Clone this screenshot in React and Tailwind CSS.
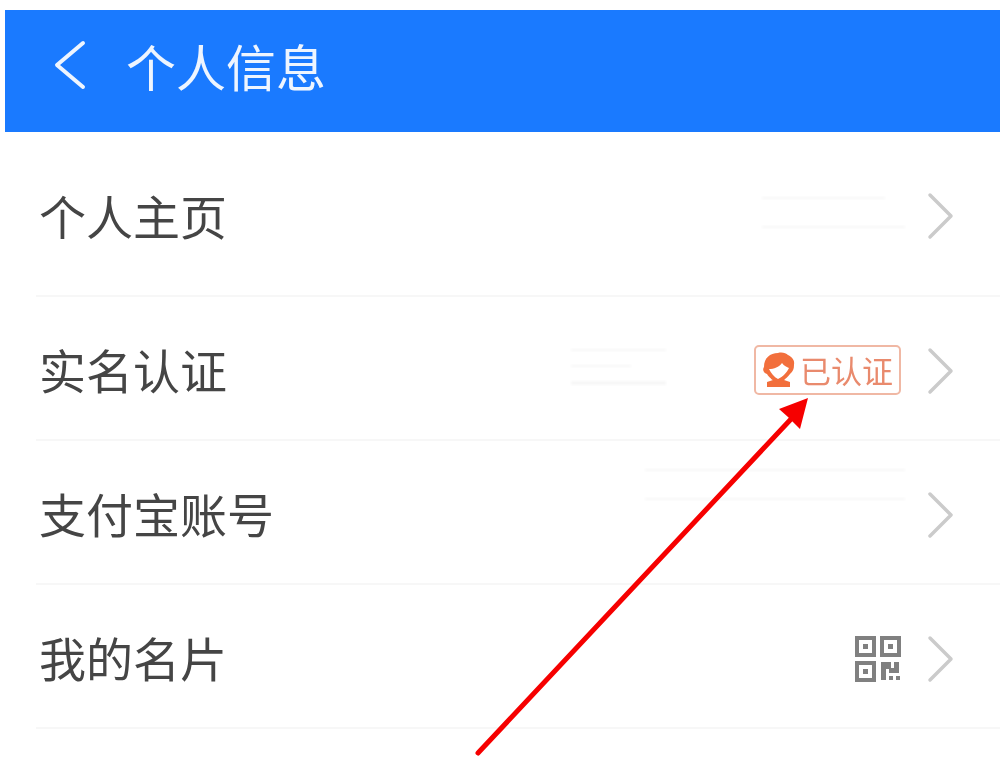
const Chevron = () => (
  <svg width="28" height="48" viewBox="0 0 28 48" fill="none" className="shrink-0">
    <path d="M3 3 L24 24 L3 45" stroke="#cbcbcb" strokeWidth="3.5" strokeLinecap="round" strokeLinejoin="round" />
  </svg>
);

const Smudge = ({ className }) => (
  <div className={`bg-[#f7f7f7] blur-[1px] ${className}`} />
);

const VerifiedBadge = () => (
  <div className="flex items-center h-[50px] w-[147px] mr-[26px] border-2 border-[#f0b8a4] rounded-[5px] pl-[6px] gap-[5px] mb-[2px]">
    <svg width="33" height="36" viewBox="0 0 33 36" className="shrink-0">
      <path
        d="M2 15 C2 6 8 1 16 1 C20 0 24 1 26 3 C30 5 33 8 32 13 C32 17 31 19 28 22 C26 25 23 27 22 28 L28 30 V35 H5 V30 L11 28 C8 26 6 24 5 22 C2 21 0 18 2 15 Z"
        fill="#f26f3c"
      />
      <path d="M7 17 C12 17 17 15 20 11 C22 14 25 15 27 16 C25 20 21 25 16 27 C12 25 9 21 7 17 Z" fill="#fff" />
      <path d="M9 27 L16 30 L23 27 L22 24 L16 28 L10 24 Z" fill="#f26f3c" />
    </svg>
    <span className="text-[31px] leading-none text-[#e98a6d] whitespace-nowrap">已认证</span>
  </div>
);

const QrIcon = () => (
  <svg width="46" height="46" viewBox="0 0 46 46" fill="none" className="mr-[26px] shrink-0">
    <g stroke="#808080" strokeWidth="4">
      <rect x="2" y="2" width="17" height="17" />
      <rect x="27" y="2" width="17" height="17" />
      <rect x="2" y="27" width="17" height="17" />
    </g>
    <g fill="#808080">
      <rect x="8" y="8" width="5" height="5" />
      <rect x="33" y="8" width="5" height="5" />
      <rect x="8" y="33" width="5" height="5" />
      <path d="M26 26 H36 V32 H39 V26 H44 V37 H34 V33 H31 V44 H26 Z" />
      <rect x="34" y="40" width="4" height="4" />
      <rect x="41" y="40" width="4" height="4" />
    </g>
  </svg>
);

const Row = ({ title, children, height }) => (
  <div className={`flex items-center ml-[36px] pl-[3px] pr-[45px] pt-[5px] border-b-2 border-[#f7f7f7] ${height}`}>
    <span className="pb-[4px] text-[47px] leading-none text-[#454545] flex-1 whitespace-nowrap">
      {title}
    </span>
    {children}
    <Chevron />
  </div>
);

const App = () => {
  return (
    <div
      className="relative w-[1000px] h-[758px] overflow-hidden bg-white pt-[10px]"
      style={{ fontFamily: '"Noto Sans CJK SC", "Liberation Sans", sans-serif' }}
    >
      <div className="blur-[0.6px]">
        <div className="ml-[5px] h-[122px] bg-[#1a7aff] flex items-center pl-[48px] pb-[12px]">
          <svg width="34" height="50" viewBox="0 0 34 50" fill="none" className="shrink-0">
            <path d="M30 3 L4 25 L30 47" stroke="#eef5ff" strokeWidth="4" strokeLinecap="round" strokeLinejoin="round" />
          </svg>
          <h1 className="ml-[39px] text-[50px] leading-none text-[#eef5ff] font-normal">个人信息</h1>
        </div>

        <Row title="个人主页" height="h-[165px]">
          <div className="flex flex-col gap-[27px] mr-[22px] mb-[8px] w-[143px]">
            <Smudge className="w-[123px] h-[2px]" />
            <Smudge className="w-[143px] h-[2px]" />
          </div>
        </Row>
        <Row title="实名认证" height="h-[144px]">
          <div className="flex flex-col gap-[14px] mr-[88px] mb-[8px] w-[95px]">
            <Smudge className="w-[95px] h-[2px]" />
            <Smudge className="w-[60px] h-[2px]" />
            <Smudge className="w-[95px] h-[4px]" />
          </div>
          <VerifiedBadge />
        </Row>
        <Row title="支付宝账号" height="h-[144px]">
          <div className="flex flex-col gap-[27px] mr-[22px] mb-[60px]">
            <Smudge className="w-[260px] h-[2px]" />
            <Smudge className="w-[260px] h-[2px]" />
          </div>
        </Row>
        <Row title="我的名片" height="h-[144px]">
          <QrIcon />
        </Row>
      </div>

      {/* red arrow drawn over the page */}
      <svg width="1000" height="758" viewBox="0 0 1000 758" className="absolute inset-0 pointer-events-none blur-[0.6px]">
        <path d="M478 753 L792 418" stroke="#f60000" strokeWidth="5" strokeLinecap="round" />
        <path d="M808 398 L779 409 L788 417 L800 429 Z" fill="#f60000" />
      </svg>
    </div>
  );
};

export default App;
